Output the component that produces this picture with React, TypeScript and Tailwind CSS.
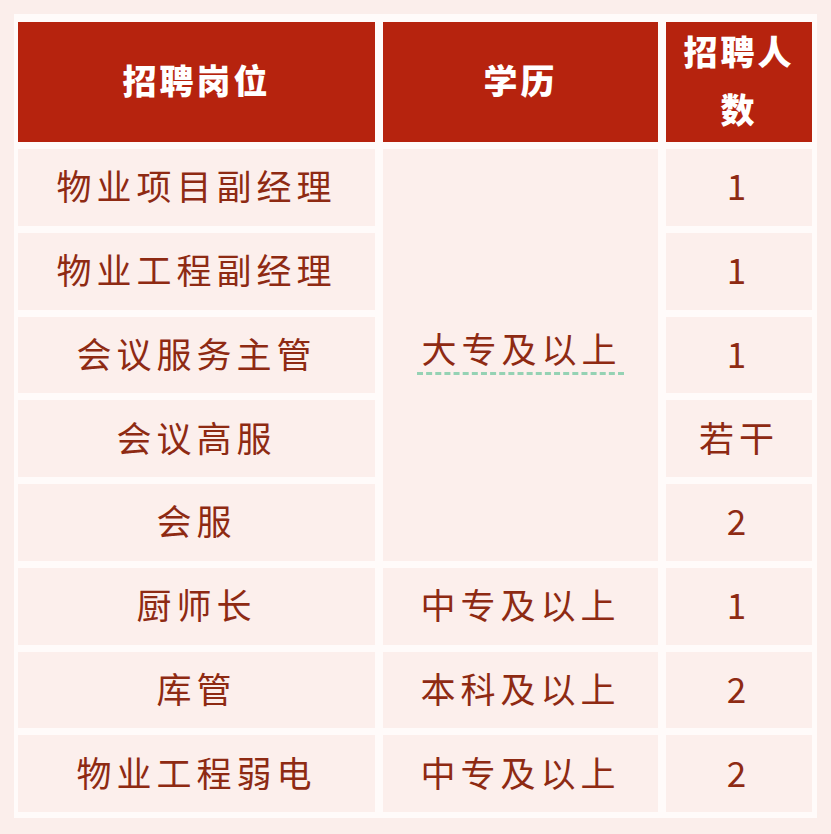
import { Fragment } from 'react';

const rows = [
  { title: '物业项目副经理', count: '1' },
  { title: '物业工程副经理', count: '1' },
  { title: '会议服务主管', count: '1' },
  { title: '会议高服', count: '若干' },
  { title: '会服', count: '2' },
  { title: '厨师长', count: '1', edu: '中专及以上' },
  { title: '库管', count: '2', edu: '本科及以上' },
  { title: '物业工程弱电', count: '2', edu: '中专及以上' },
];

const font = { fontFamily: '"Noto Sans CJK SC", "Noto Sans", sans-serif' };

function Cell({ children, className = '' }: { children: React.ReactNode; className?: string }) {
  return (
    <div
      className={`flex items-center justify-center bg-[#fcefec] pb-[5px] text-[35px] leading-none tracking-[5px] text-[#8e2a13] ${className}`}
    >
      {children}
    </div>
  );
}

export default function App() {
  return (
    <div className="w-[831px] h-[834px] bg-[#fbeeeb] pt-[14px] pl-[14px]" style={font}>
      <div className="w-[803px] h-[804px] bg-[#fffbfa] pt-[8px] pl-[4px] pr-[5px] pb-[6px]">
        <div className="grid h-full grid-cols-[357px_275px_146px] grid-rows-[120px_repeat(8,1fr)] gap-x-[8px] gap-y-[7px]">
          <div className="flex items-center justify-center bg-[#b6230e] pb-[6px] text-[34px] font-black tracking-[3px] text-white">
            招聘岗位
          </div>
          <div className="flex items-center justify-center bg-[#b6230e] pb-[6px] text-[34px] font-black tracking-[3px] text-white">
            学历
          </div>
          <div className="flex items-center justify-center bg-[#b6230e] pb-[4px] text-center text-[34px] font-black leading-[58px] tracking-[3px] text-white">
            招聘人
            <br />
            数
          </div>

          {rows.map((r, i) => (
            <Fragment key={i}>
              <Cell className="col-start-1">{r.title}</Cell>
              {i === 0 && (
                <Cell className="row-span-5 col-start-2 row-start-2">
                  <span className="border-b-[3px] border-dashed border-[#95d2b4] pb-[7px] pl-[4px] pr-[2px]">
                    大专及以上
                  </span>
                </Cell>
              )}
              {r.edu && <Cell className="col-start-2">{r.edu}</Cell>}
              <Cell className="col-start-3">{r.count}</Cell>
            </Fragment>
          ))}
        </div>
      </div>
    </div>
  );
}
